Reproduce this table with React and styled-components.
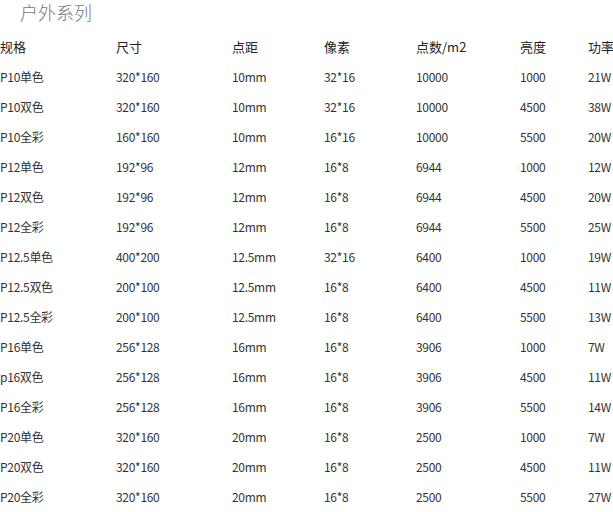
import styled, { createGlobalStyle } from "styled-components";

const GlobalStyle = createGlobalStyle`
  html, body {
    margin: 0;
    padding: 0;
    background: #ffffff;
  }
  body {
    font-family: "Liberation Sans", "Noto Sans CJK SC", sans-serif;
    color: #333;
    overflow: hidden;
  }
`;

const headers = ["规格", "尺寸", "点距", "像素", "点数/m2", "亮度", "功率"];

const rows = [
  ["P10单色", "320*160", "10mm", "32*16", "10000", "1000", "21W"],
  ["P10双色", "320*160", "10mm", "32*16", "10000", "4500", "38W"],
  ["P10全彩", "160*160", "10mm", "16*16", "10000", "5500", "20W"],
  ["P12单色", "192*96", "12mm", "16*8", "6944", "1000", "12W"],
  ["P12双色", "192*96", "12mm", "16*8", "6944", "4500", "20W"],
  ["P12全彩", "192*96", "12mm", "16*8", "6944", "5500", "25W"],
  ["P12.5单色", "400*200", "12.5mm", "32*16", "6400", "1000", "19W"],
  ["P12.5双色", "200*100", "12.5mm", "16*8", "6400", "4500", "11W"],
  ["P12.5全彩", "200*100", "12.5mm", "16*8", "6400", "5500", "13W"],
  ["P16单色", "256*128", "16mm", "16*8", "3906", "1000", "7W"],
  ["p16双色", "256*128", "16mm", "16*8", "3906", "4500", "11W"],
  ["P16全彩", "256*128", "16mm", "16*8", "3906", "5500", "14W"],
  ["P20单色", "320*160", "20mm", "16*8", "2500", "1000", "7W"],
  ["P20双色", "320*160", "20mm", "16*8", "2500", "4500", "11W"],
  ["P20全彩", "320*160", "20mm", "16*8", "2500", "5500", "27W"],
];

function App() {
  return (
    <Page>
      <GlobalStyle />
      <Title>户外系列</Title>
      <Table>
        <Row>
          {headers.map((h) => (
            <Cell key={h} $head>
              {h}
            </Cell>
          ))}
        </Row>
        {rows.map((r, i) => (
          <Row key={i}>
            {r.map((c, j) => (
              <Cell key={j}>{c}</Cell>
            ))}
          </Row>
        ))}
      </Table>
    </Page>
  );
}

export default App;

const Page = styled.div`
  width: 613px;
  height: 512px;
  overflow: hidden;
`;

const Title = styled.div`
  height: 32px;
  padding-left: 20px;
  font-size: 18px;
  line-height: 24px;
  color: #777;
  font-family: "Noto Sans CJK SC", sans-serif;
  font-weight: 300;
`;

const Table = styled.div`
  display: flex;
  flex-direction: column;
`;

const Row = styled.div`
  display: grid;
  grid-template-columns: 116px 116px 92px 92px 104px 68px 60px;
  height: 30px;
  align-items: center;
  white-space: nowrap;
`;

const Cell = styled.div`
  font-size: ${(p) => (p.$head ? "13px" : "12px")};
  color: ${(p) => (p.$head ? "#222" : "#333")};
  font-family: "Noto Sans CJK SC", sans-serif;
  letter-spacing: ${(p) => (p.$head ? "0" : "-0.3px")};
  line-height: 30px;
`;
